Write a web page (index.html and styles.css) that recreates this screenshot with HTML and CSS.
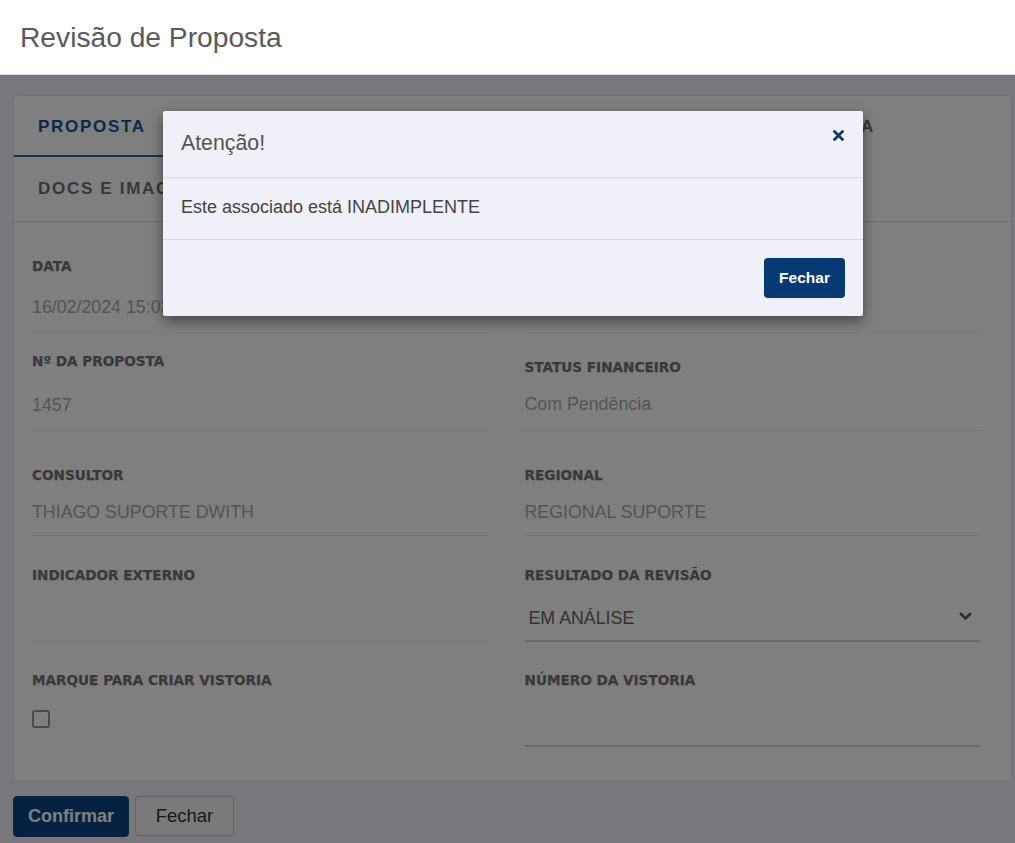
FILE: index.html
```html
<!DOCTYPE html>
<html lang="pt-BR">
<head>
<meta charset="utf-8">
<title>Revisão de Proposta</title>
<link rel="stylesheet" href="styles.css">
</head>
<body>
<header class="page-header">
  <h1 class="page-title">Revisão de Proposta</h1>
</header>
<main class="content">
  <section class="card">
    <nav class="tabs">
      <a class="tab active">PROPOSTA</a>
      <a class="tab">ASSOCIADO</a>
      <a class="tab">VEÍCULO</a>
      <a class="tab">ANÁLISE FINANCEIRA</a>
      <a class="tab">COBRANÇA</a>
      <a class="tab">DOCS E IMAGENS</a>
    </nav>
    <div class="fields">
      <div class="field r1">
        <span class="field-label">DATA</span>
        <span class="field-value">16/02/2024 15:03:22</span>
      </div>
      <div class="field r1">
        <span class="field-label">SITUAÇÃO</span>
        <span class="field-value">Ativa</span>
      </div>

      <div class="field r2-left">
        <span class="field-label">Nº DA PROPOSTA</span>
        <span class="field-value">1457</span>
      </div>
      <div class="field r2-right">
        <span class="field-label">STATUS FINANCEIRO</span>
        <span class="field-value">Com Pendência</span>
      </div>

      <div class="field r3">
        <span class="field-label">CONSULTOR</span>
        <span class="field-value">THIAGO SUPORTE DWITH</span>
      </div>
      <div class="field r3">
        <span class="field-label">REGIONAL</span>
        <span class="field-value">REGIONAL SUPORTE</span>
      </div>

      <div class="field r4">
        <span class="field-label">INDICADOR EXTERNO</span>
        <span class="field-value"></span>
      </div>
      <div class="field r4 no-line">
        <span class="field-label">RESULTADO DA REVISÃO</span>
        <div class="select-box">
          <span class="select-text">EM ANÁLISE</span>
          <svg class="chevron" width="13" height="9" viewBox="0 0 13 9"><path d="M1.8 1.8 L6.5 6.5 L11.2 1.8" fill="none" stroke="#585858" stroke-width="2.6" stroke-linecap="round" stroke-linejoin="round"/></svg>
        </div>
      </div>

      <div class="field r5 no-line">
        <span class="field-label">MARQUE PARA CRIAR VISTORIA</span>
        <span class="checkbox"></span>
      </div>
      <div class="field r5 no-line">
        <span class="field-label">NÚMERO DA VISTORIA</span>
        <div class="text-input"></div>
      </div>
    </div>
  </section>

  <div class="actions">
    <button class="btn btn-primary">Confirmar</button>
    <button class="btn btn-default">Fechar</button>
  </div>

  <div class="backdrop"></div>

  <div class="modal">
    <div class="modal-header">
      <span class="modal-title">Atenção!</span>
      <span class="modal-close">
        <svg width="11" height="11" viewBox="0 0 11 11"><path d="M1.5 1.5 L9.5 9.5 M9.5 1.5 L1.5 9.5" stroke="#0d3a6c" stroke-width="2.8" stroke-linecap="round"/></svg>
      </span>
    </div>
    <div class="modal-body">Este associado está INADIMPLENTE</div>
    <div class="modal-footer">
      <button class="modal-btn">Fechar</button>
    </div>
  </div>
</main>
</body>
</html>
```
FILE: styles.css
```css
* { box-sizing: border-box; }

html, body {
  margin: 0;
  padding: 0;
}

body {
  font-family: "Liberation Sans", Arial, sans-serif;
  background: #f0eef8;
  width: 1015px;
  min-height: 843px;
}

.page-header {
  background: #ffffff;
  height: 74px;
  display: flex;
  align-items: center;
  padding-left: 20px;
}

.page-title {
  margin: 0;
  font-weight: normal;
  font-size: 28.2px;
  color: #5a5a5a;
  line-height: 1;
}

.content {
  position: relative;
  min-height: 769px;
  border-top: 1px solid #dcdce4;
  padding: 20px 3px 0 13px;
  background: #f0eef8;
}

.card {
  background: #ffffff;
  border: 1px solid #e2e2e2;
  border-radius: 4px;
}

.tabs {
  display: flex;
  flex-wrap: wrap;
  border-bottom: 1px solid #dcdcdc;
  padding-bottom: 2px;
  margin-top: -1px;
}

.tab {
  display: block;
  padding: 22px 25px 18px 24px;
  font-weight: bold;
  font-size: 17px;
  line-height: 20px;
  letter-spacing: 1.7px;
  color: #707070;
  border-bottom: 2px solid transparent;
  white-space: nowrap;
}

.tab.active {
  color: #17529a;
  border-bottom-color: #36649e;
}

.fields {
  display: grid;
  grid-template-columns: 1fr 1fr;
  column-gap: 37px;
  padding: 0 31px 34px 18px;
}

.field {
  display: flex;
  flex-direction: column;
  border-bottom: 1px solid #ececec;
  padding-top: 31px;
}

.field.no-line {
  border-bottom: none;
}

.field-label {
  font-family: "DejaVu Sans", sans-serif;
  font-weight: bold;
  font-size: 13.6px;
  line-height: 18px;
  color: #727272;
  -webkit-text-stroke: 0.25px #727272;
}

.field-value {
  font-size: 17.8px;
  line-height: 24px;
  min-height: 24px;
  color: #aaaaaa;
  margin-top: 16px;
  padding-bottom: 13px;
}

.r1 { padding-top: 35px; }
.r1 .field-value { margin-top: 20px; }

.r2-left { padding-top: 19px; }
.r2-left .field-value { margin-top: 23px; }
.r2-right { padding-top: 25px; }

.r3 { padding-top: 35px; }
.r3 .field-value { padding-bottom: 11px; }

.r4 { padding-top: 30px; }
.r5 { padding-top: 29px; }

.select-box {
  margin-top: 12px;
  height: 46px;
  border-bottom: 2px solid #d2d2d2;
  display: flex;
  align-items: center;
  justify-content: space-between;
  padding: 0 8px 0 4px;
}

.select-text {
  font-size: 17.8px;
  color: #666666;
}

.chevron {
  margin-top: -4px;
}

.checkbox {
  display: block;
  margin-top: 21px;
  width: 18px;
  height: 18px;
  border: 2px solid #959595;
  border-radius: 3px;
  background: #ffffff;
}

.text-input {
  margin-top: 12px;
  height: 46px;
  border-bottom: 2px solid #d2d2d2;
}

.actions {
  display: flex;
  gap: 6px;
  margin-top: 14px;
}

.btn {
  font-family: "Liberation Sans", Arial, sans-serif;
  height: 41px;
  border-radius: 4px;
  cursor: pointer;
}

.btn-primary {
  width: 116px;
  background: #0b4585;
  border: 1px solid #0b4585;
  color: #ffffff;
  font-weight: bold;
  font-size: 18px;
}

.btn-default {
  width: 99px;
  height: 40px;
  background: #f4f4f4;
  border: 1px solid #c8c8c8;
  color: #333333;
  font-size: 18.5px;
}

.backdrop {
  position: absolute;
  inset: 0;
  background: rgba(0, 0, 0, 0.5);
}

.modal {
  position: absolute;
  top: 36px;
  left: 163px;
  width: 700px;
  background: #eff0f8;
  border-radius: 2px;
  box-shadow: 0 5px 14px rgba(0, 0, 0, 0.45);
}

.modal-header {
  height: 67px;
  display: flex;
  justify-content: space-between;
  align-items: flex-start;
  padding: 0 18px;
  border-bottom: 1px solid #d8d9e2;
}

.modal-title {
  font-size: 21.3px;
  color: #555555;
  margin-top: 20px;
}

.modal-close {
  margin-top: 19px;
  margin-right: 1px;
  display: flex;
}

.modal-body {
  height: 62px;
  display: flex;
  align-items: center;
  padding: 0 18px 2px;
  font-size: 18px;
  color: #444444;
  border-bottom: 1px solid #d8d9e2;
}

.modal-footer {
  display: flex;
  justify-content: flex-end;
  padding: 18px;
}

.modal-btn {
  font-family: "Liberation Sans", Arial, sans-serif;
  height: 40px;
  width: 81px;
  background: #063a73;
  border: none;
  border-radius: 4px;
  color: #ffffff;
  font-weight: bold;
  font-size: 15.5px;
}
```
